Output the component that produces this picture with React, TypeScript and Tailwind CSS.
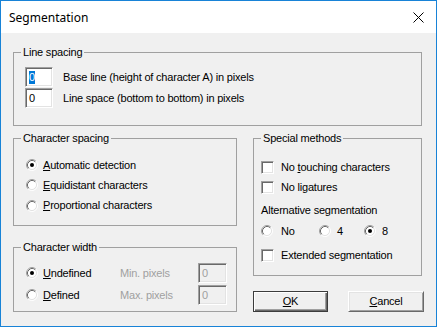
import React from "react";

const F = { fontFamily: '"Liberation Sans", Arial, sans-serif' };

function Radio({ checked }: { checked?: boolean }) {
  return (
    <svg width="12" height="12" viewBox="0 0 12 12" className="shrink-0">
      <circle cx="6" cy="6" r="4.5" fill="#ffffff" />
      <path d="M 2.11 9.89 A 5.5 5.5 0 0 1 9.89 2.11" fill="none" stroke="#a0a0a0" strokeWidth="1" />
      <path d="M 9.89 2.11 A 5.5 5.5 0 0 1 2.11 9.89" fill="none" stroke="#ffffff" strokeWidth="1" />
      <path d="M 2.82 9.18 A 4.5 4.5 0 0 1 9.18 2.82" fill="none" stroke="#696969" strokeWidth="1" />
      <path d="M 9.18 2.82 A 4.5 4.5 0 0 1 2.82 9.18" fill="none" stroke="#e3e3e3" strokeWidth="1" />
      {checked && <circle cx="6" cy="6" r="2" fill="#000000" />}
    </svg>
  );
}

function Check() {
  return (
    <div className="w-[13px] h-[13px] shrink-0 bg-white border border-t-[#a0a0a0] border-l-[#a0a0a0] border-b-white border-r-white shadow-[inset_1px_1px_0_#696969,inset_-1px_-1px_0_#e3e3e3]" />
  );
}

function Field({ value, w, disabled, selected }: { value: string; w: number; disabled?: boolean; selected?: boolean }) {
  return (
    <div
      className={
        "h-[20px] shrink-0 flex items-center pl-[3px] border border-t-[#a0a0a0] border-l-[#a0a0a0] border-b-white border-r-white shadow-[inset_1px_1px_0_#696969,inset_-1px_-1px_0_#e3e3e3] " +
        (disabled ? "bg-[#f0f0f0] text-[#a0a0a0]" : "bg-white text-black")
      }
      style={{ width: w }}
    >
      {selected ? (
        <span className="bg-[#0078d7] text-white leading-[13px]">{value}</span>
      ) : (
        <span className="leading-[13px]">{value}</span>
      )}
    </div>
  );
}

function Group({ title, className, children }: { title: string; className: string; children: React.ReactNode }) {
  return (
    <div className={"relative border border-[#a0a0a0] " + className}>
      <span className="absolute -top-[7px] left-[7px] px-[2px] bg-[#f0f0f0] leading-[13px]">{title}</span>
      {children}
    </div>
  );
}

export default function App() {
  return (
    <div className="w-[437px] h-[327px] border border-[#1883d7] flex flex-col text-[11px] tracking-[-0.2px] text-black bg-[#f0f0f0] overflow-hidden" style={F}>
      <div className="h-[32px] bg-white flex items-center justify-between shrink-0">
        <span className="pl-[8px] text-[12px] pt-[1px] tracking-normal" style={{ fontFamily: '"Noto Sans", "Open Sans", sans-serif' }}>
          Segmentation
        </span>
        <svg width="11" height="11" viewBox="0 0 11 11" className="mr-[12px] mt-[1px]">
          <path d="M0.5 0.5 L10.5 10.5 M10.5 0.5 L0.5 10.5" stroke="#000" strokeWidth="1" />
        </svg>
      </div>
      <div className="flex-1 pl-[12px] pt-[19px] leading-[13px]">
        <Group title="Line spacing" className="w-[409px] h-[74px] pl-[11px] pt-[14px] flex flex-col gap-[1px]">
          <div className="flex items-center h-[20px]">
            <Field value="0" w={28} selected />
            <span className="ml-[10px]">Base line (height of character A) in pixels</span>
          </div>
          <div className="flex items-center h-[20px]">
            <Field value="0" w={28} />
            <span className="ml-[10px]">Line space (bottom to bottom) in pixels</span>
          </div>
        </Group>
        <div className="flex mt-[12px]">
          <div className="w-[224px] flex flex-col">
            <Group title="Character spacing" className="h-[88px] pl-[12px] pt-[16px]">
              <div className="flex items-center h-[20px]">
                <Radio checked />
                <span className="ml-[5px]"><u>A</u>utomatic detection</span>
              </div>
              <div className="flex items-center h-[20px]">
                <Radio />
                <span className="ml-[5px]"><u>E</u>quidistant characters</span>
              </div>
              <div className="flex items-center h-[21px]">
                <Radio />
                <span className="ml-[5px]"><u>P</u>roportional characters</span>
              </div>
            </Group>
            <Group title="Character width" className="mt-[21px] h-[65px] pl-[12px] pt-[14px]">
              <div className="flex items-center h-[22px]">
                <div className="w-[94px] flex items-center">
                  <Radio checked />
                  <span className="ml-[5px]"><u>U</u>ndefined</span>
                </div>
                <span className="w-[78px] text-[#a0a0a0]">Min. pixels</span>
                <Field value="0" w={29} disabled />
              </div>
              <div className="flex items-center h-[22px]">
                <div className="w-[94px] flex items-center">
                  <Radio />
                  <span className="ml-[5px]"><u>D</u>efined</span>
                </div>
                <span className="w-[78px] text-[#a0a0a0]">Max. pixels</span>
                <Field value="0" w={29} disabled />
              </div>
            </Group>
          </div>
          <div className="ml-[16px] w-[169px] flex flex-col">
            <Group title="Special methods" className="h-[138px] pl-[7px] pt-[22px] flex flex-col">
              <div className="flex items-center h-[13px]">
                <Check />
                <span className="ml-[7px]">No <u>t</u>ouching characters</span>
              </div>
              <div className="flex items-center h-[13px] mt-[7px]">
                <Check />
                <span className="ml-[7px]">No ligatures</span>
              </div>
              <div className="mt-[10px] h-[13px]">Alternative segmentation</div>
              <div className="flex items-center h-[12px] mt-[8px]">
                <div className="w-[58px] flex items-center">
                  <Radio />
                  <span className="ml-[8px]">No</span>
                </div>
                <div className="w-[45px] flex items-center">
                  <Radio />
                  <span className="ml-[6px]">4</span>
                </div>
                <div className="flex items-center">
                  <Radio checked />
                  <span className="ml-[6px]">8</span>
                </div>
              </div>
              <div className="flex items-center h-[13px] mt-[12px]">
                <Check />
                <span className="ml-[7px]">Extended segmentation</span>
              </div>
            </Group>
            <div className="flex mt-[15px] w-[171px]">
              <div className="w-[75px] h-[21px] flex items-center justify-center bg-[#f0f0f0] border border-[#3c3c3c] shadow-[inset_1px_1px_0_#ffffff,inset_-1px_-1px_0_#696969,inset_-2px_-2px_0_#a0a0a0]">
                <span><u>O</u>K</span>
              </div>
              <div className="ml-[20px] w-[76px] h-[21px] flex items-center justify-center bg-[#f0f0f0] border border-t-white border-l-white border-b-[#696969] border-r-[#696969] shadow-[inset_1px_1px_0_#e3e3e3,inset_-1px_-1px_0_#a0a0a0]">
                <span><u>C</u>ancel</span>
              </div>
            </div>
          </div>
        </div>
      </div>
    </div>
  );
}
